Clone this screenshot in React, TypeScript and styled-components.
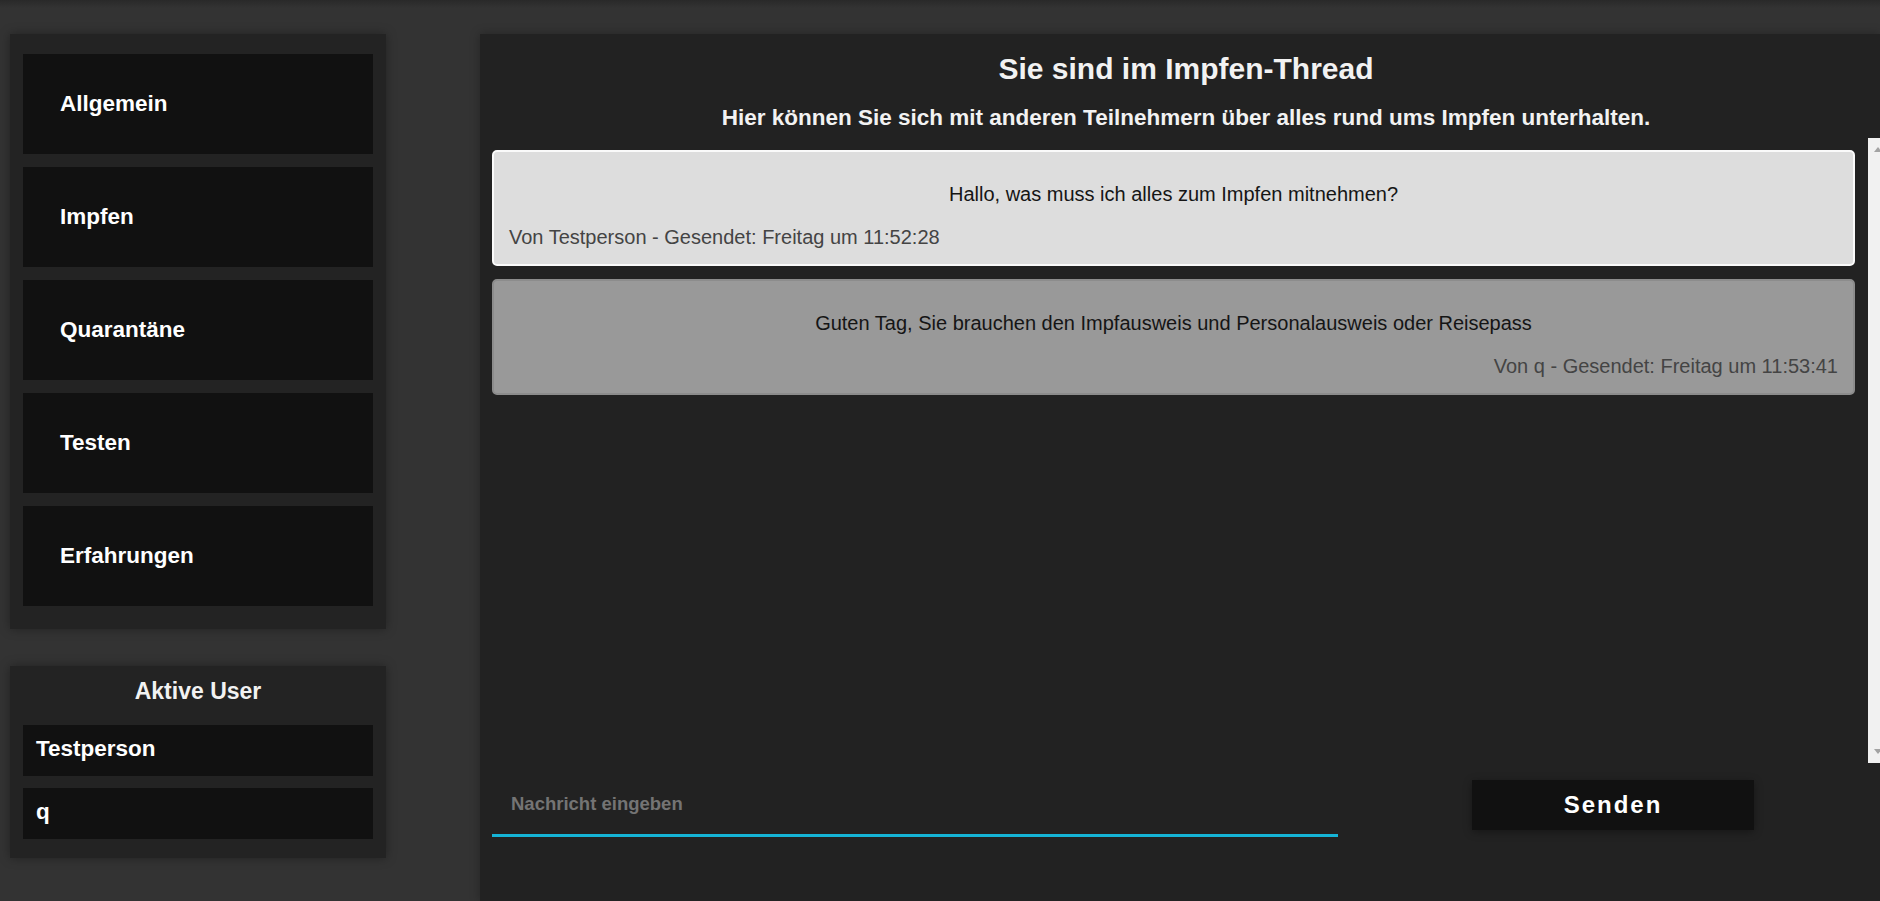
import styled, { createGlobalStyle } from "styled-components";

const GlobalStyle = createGlobalStyle`
  html, body {
    margin: 0;
    padding: 0;
    overflow: hidden;
    background: #333;
  }
  body {
    font-family: "Liberation Sans", Arial, sans-serif;
  }
`;

const Page = styled.div`
  display: flex;
  align-items: flex-start;
  width: 1880px;
  height: 100vh;
  box-sizing: border-box;
  padding: 34px 0 0 10px;
  background: linear-gradient(to bottom, #292929 0, #333 8px);
`;

const Sidebar = styled.aside`
  display: flex;
  flex-direction: column;
  gap: 37px;
  width: 376px;
  flex-shrink: 0;
`;

const Card = styled.div<{ $pad: string }>`
  background: #232323;
  box-shadow: 0 0 10px rgba(0, 0, 0, 0.35);
  padding: ${(p) => p.$pad};
`;

const NavItem = styled.div`
  display: flex;
  align-items: center;
  height: 100px;
  margin-bottom: 13px;
  padding-left: 37px;
  background: #111;
  color: #fff;
  font-size: 22.5px;
  font-weight: bold;
  cursor: pointer;
`;

const UserTitle = styled.div`
  text-align: center;
  color: #f2f2f2;
  font-size: 23px;
  font-weight: bold;
  line-height: 26px;
  margin-bottom: 21px;
`;

const UserItem = styled.div`
  display: flex;
  align-items: center;
  height: 51px;
  box-sizing: border-box;
  padding: 0 0 3px 13px;
  background: #111;
  color: #fff;
  font-size: 22.5px;
  font-weight: bold;
  & + & {
    margin-top: 12px;
  }
`;

const Main = styled.main`
  display: flex;
  flex-direction: column;
  flex-shrink: 0;
  width: 1400px;
  height: calc(100vh - 34px);
  margin-left: 94px;
  box-sizing: border-box;
  padding-left: 12px;
  background: #222;
  box-shadow: 0 0 10px rgba(0, 0, 0, 0.3);
`;

const Title = styled.h1`
  margin: 18px 0 0;
  text-align: center;
  color: #f2f2f2;
  font-size: 30px;
  line-height: 34.5px;
  font-weight: bold;
`;

const Subtitle = styled.h2`
  margin: 18px 0 0;
  text-align: center;
  color: #f2f2f2;
  font-size: 22.5px;
  line-height: 26px;
  font-weight: bold;
`;

const ListWrap = styled.div`
  display: flex;
  height: 625px;
  margin-top: 7px;
  flex-shrink: 0;
`;

const MessageList = styled.div`
  flex: 1;
  display: flex;
  flex-direction: column;
  gap: 13px;
  box-sizing: border-box;
  padding: 12px 13px 0 0;
  overflow: hidden;
`;

/* light scrollbar track at the right edge, its arrows cut by the window edge */
const ScrollTrack = styled.div`
  position: relative;
  width: 12px;
  flex-shrink: 0;
  overflow: hidden;
  background: #f1f1f1;

  &::before,
  &::after {
    content: "";
    position: absolute;
    left: 6px;
    border-left: 4px solid transparent;
    border-right: 4px solid transparent;
  }
  &::before {
    top: 9px;
    border-bottom: 5px solid #a3a3a3;
  }
  &::after {
    bottom: 9px;
    border-top: 5px solid #a3a3a3;
  }
`;

const Message = styled.div<{ $own: boolean }>`
  flex-shrink: 0;
  border-radius: 5px;
  padding: 13px 15px 15px;
  background: ${(p) => (p.$own ? "#dddddd" : "#999999")};
  border: 2px solid ${(p) => (p.$own ? "#fafafa" : "#8c8c8c")};
`;

const MessageText = styled.p`
  margin: 18px 0 20px;
  text-align: center;
  color: #151515;
  font-size: 20px;
  line-height: 23px;
`;

const MessageMeta = styled.div<{ $align: "left" | "right" }>`
  text-align: ${(p) => p.$align};
  color: #444;
  font-size: 20px;
  line-height: 23px;
`;

const InputRow = styled.div`
  display: flex;
  align-items: flex-start;
  margin-top: 17px;
`;

const MessageInput = styled.input`
  width: 846px;
  height: 57px;
  box-sizing: border-box;
  padding: 0 0 5px 19px;
  border: none;
  border-bottom: 3px solid #15b4d6;
  background: transparent;
  outline: none;
  color: #eee;
  font-family: "Liberation Sans", Arial, sans-serif;
  font-size: 18.5px;
  font-weight: bold;

  &::placeholder {
    color: #747474;
  }
`;

const SendButton = styled.button`
  width: 282px;
  height: 50px;
  margin-left: 134px;
  border: none;
  background: #111;
  color: #fff;
  font-family: "Liberation Sans", Arial, sans-serif;
  font-size: 24px;
  font-weight: bold;
  letter-spacing: 2px;
  box-shadow: 0 2px 8px rgba(0, 0, 0, 0.35);
  cursor: pointer;
`;

const topics = ["Allgemein", "Impfen", "Quarantäne", "Testen", "Erfahrungen"];
const users = ["Testperson", "q"];

const messages = [
  {
    text: "Hallo, was muss ich alles zum Impfen mitnehmen?",
    meta: "Von Testperson - Gesendet: Freitag um 11:52:28",
    own: true,
  },
  {
    text: "Guten Tag, Sie brauchen den Impfausweis und Personalausweis oder Reisepass",
    meta: "Von q - Gesendet: Freitag um 11:53:41",
    own: false,
  },
];

export default function App() {
  return (
    <>
      <GlobalStyle />
      <Page>
        <Sidebar>
          <Card $pad="20px 13px 10px">
            {topics.map((t) => (
              <NavItem key={t}>{t}</NavItem>
            ))}
          </Card>
          <Card $pad="12px 13px 19px">
            <UserTitle>Aktive User</UserTitle>
            {users.map((u) => (
              <UserItem key={u}>{u}</UserItem>
            ))}
          </Card>
        </Sidebar>
        <Main>
          <Title>Sie sind im Impfen-Thread</Title>
          <Subtitle>
            Hier können Sie sich mit anderen Teilnehmern über alles rund ums Impfen unterhalten.
          </Subtitle>
          <ListWrap>
            <MessageList>
              {messages.map((m, i) => (
                <Message key={i} $own={m.own}>
                  <MessageText>{m.text}</MessageText>
                  <MessageMeta $align={m.own ? "left" : "right"}>{m.meta}</MessageMeta>
                </Message>
              ))}
            </MessageList>
            <ScrollTrack />
          </ListWrap>
          <InputRow>
            <MessageInput placeholder="Nachricht eingeben" />
            <SendButton>Senden</SendButton>
          </InputRow>
        </Main>
      </Page>
    </>
  );
}
